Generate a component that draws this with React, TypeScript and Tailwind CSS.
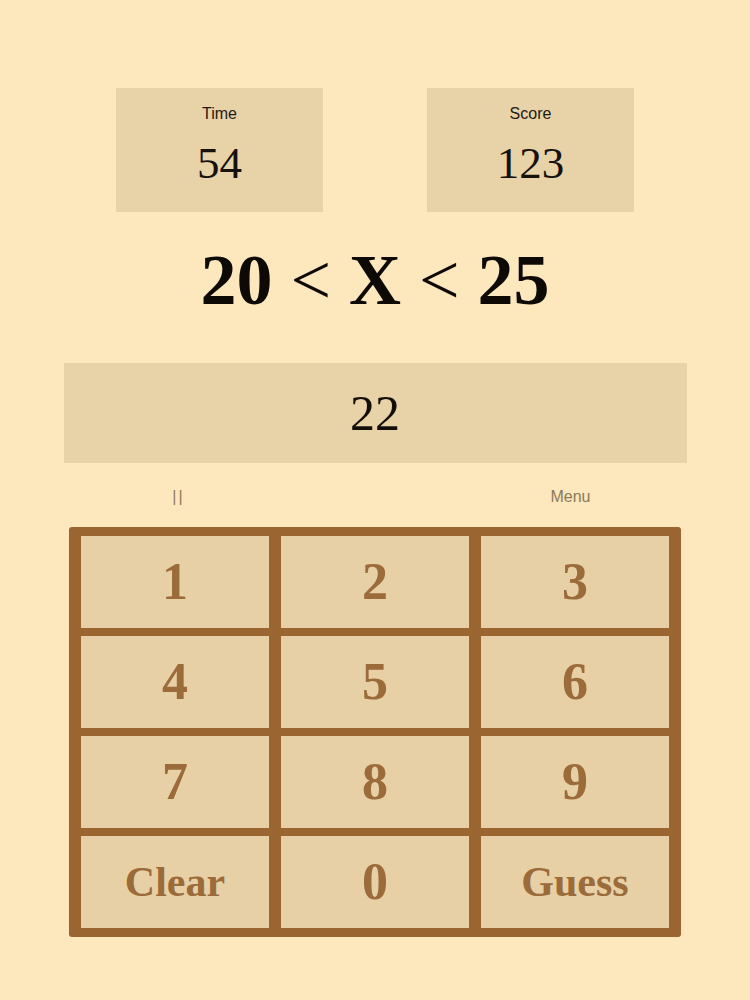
import React from "react";

const serif = { fontFamily: '"Liberation Serif", "Times New Roman", serif' };
const sans = { fontFamily: '"Liberation Sans", Arial, Helvetica, sans-serif' };

function StatBox({ label, value }: { label: string; value: string }) {
  return (
    <div className="w-[207px] h-[124px] bg-[#e8d2a8] flex flex-col items-center">
      <div className="mt-[16px] text-[16px] leading-[20px] text-[#1f1a12]" style={sans}>
        {label}
      </div>
      <div className="mt-[14px] text-[45px] leading-[50px] text-[#15110b]" style={serif}>
        {value}
      </div>
    </div>
  );
}

export default function App() {
  const keys = ["1", "2", "3", "4", "5", "6", "7", "8", "9", "Clear", "0", "Guess"];
  return (
    <div className="w-[750px] h-[1000px] bg-[#fde7bd] flex flex-col items-center overflow-hidden">
      <div className="mt-[88px] flex gap-[104px]">
        <StatBox label="Time" value="54" />
        <StatBox label="Score" value="123" />
      </div>

      <div
        className="h-[136px] flex items-center justify-center text-[72px] leading-none text-[#0d0a06]"
        style={serif}
      >
        <span className="font-bold">20</span>
        <span className="mx-[18px] font-normal">&lt;</span>
        <span className="font-bold">X</span>
        <span className="mx-[18px] font-normal">&lt;</span>
        <span className="font-bold">25</span>
      </div>

      <div className="mt-[15px] w-[623px] h-[100px] bg-[#e8d2a8] flex items-center justify-center">
        <span className="text-[50px] leading-none text-[#120e08]" style={serif}>
          22
        </span>
      </div>

      <div className="w-[623px] h-[64px] pt-[4px] flex items-center justify-between">
        <div className="w-[230px] text-center text-[16px] tracking-[2px] text-[#8c7a58]" style={sans}>
          ||
        </div>
        <div className="w-[232px] text-center text-[16px] text-[#8c7a58]" style={sans}>
          Menu
        </div>
      </div>

      <div className="w-[612px] bg-[#9b6532] rounded-[3px] px-[12px] py-[9px] grid grid-cols-3 gap-x-[12px] gap-y-[8px]">
        {keys.map((k) => {
          const word = k.length > 1;
          return (
            <div
              key={k}
              className={
                "h-[92px] bg-[#e8d0a6] flex items-center justify-center font-bold text-[#9b6b3a] " +
                (word ? "text-[42px]" : "text-[52px]")
              }
              style={serif}
            >
              {k}
            </div>
          );
        })}
      </div>
    </div>
  );
}
